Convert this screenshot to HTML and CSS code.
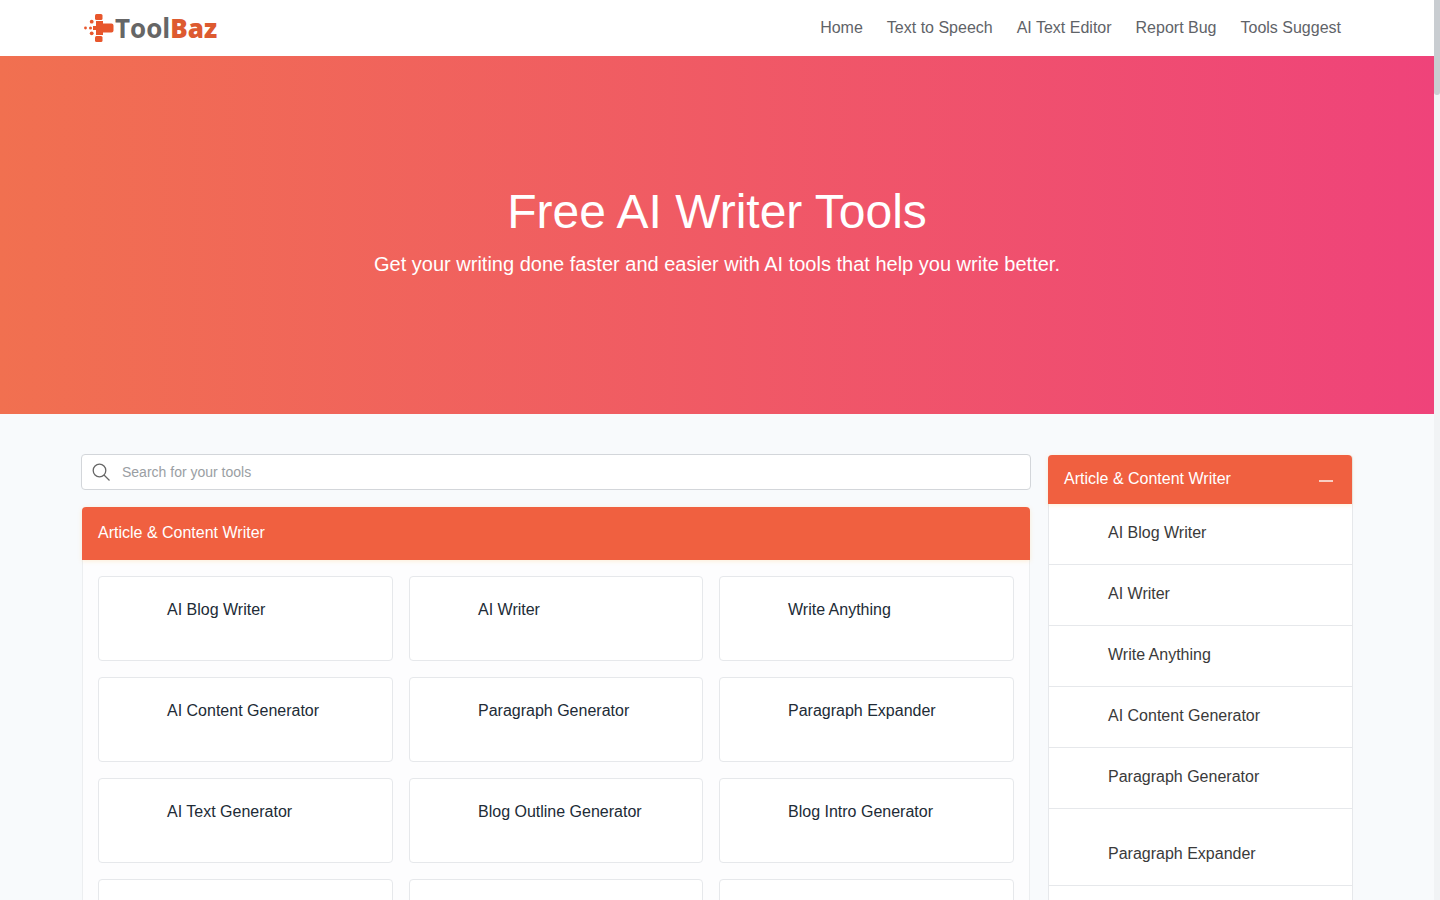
FILE: index.html
```html
<!DOCTYPE html>
<html lang="en">
  <head>
    <meta charset="UTF-8" />
    <title>Free AI Writer Tools - ToolBaz</title>
    <link rel="stylesheet" href="styles.css">
  </head>
  <body>
    <div class="page">
      <header class="topbar">
        <a class="logo" href="#">
          <svg class="logo-mark" width="30" height="30" viewBox="0 0 30 30" fill="#e8562c">
            <path d="M12 8h7v2.500h8.500q2 0 2 2v5q0 2-2 2h-8.500v2.500h-7v-5h-3v-4h3z" />
            <rect x="11" y="1" width="7.500" height="6" rx="1.500" />
            <rect x="11" y="23" width="7.500" height="6" rx="1.500" />
            <circle cx="7.700" cy="8.700" r="1.900" />
            <circle cx="7.700" cy="20.300" r="1.900" />
            <circle cx="6.500" cy="15" r="1.500" />
            <circle cx="1.500" cy="15" r="1.400" />
          </svg>
          <span class="logo-text">Tool<b>Baz</b></span>
        </a>
        <nav class="nav">
          <a href="#">Home</a>
          <a href="#">Text to Speech</a>
          <a href="#">AI Text Editor</a>
          <a href="#">Report Bug</a>
          <a href="#">Tools Suggest</a>
        </nav>
      </header>

      <section class="hero">
        <h1>Free AI Writer Tools</h1>
        <p>Get your writing done faster and easier with AI tools that help you write better.</p>
      </section>

      <main class="content">
        <div class="main-col">
          <div class="search">
            <svg width="18" height="18" viewBox="0 0 18 18" fill="none" stroke="#666" stroke-width="1.300">
              <circle cx="7.500" cy="7.500" r="6.300" />
              <path d="M12 12l5.500 5.500" />
            </svg>
            <input type="text" placeholder="Search for your tools" />
          </div>

          <section class="panel">
            <h2 class="panel-head">Article &amp; Content Writer</h2>
            <div class="tool-grid">
              <a class="tool-card" href="#">AI Blog Writer</a>
              <a class="tool-card" href="#">AI Writer</a>
              <a class="tool-card" href="#">Write Anything</a>
              <a class="tool-card" href="#">AI Content Generator</a>
              <a class="tool-card" href="#">Paragraph Generator</a>
              <a class="tool-card" href="#">Paragraph Expander</a>
              <a class="tool-card" href="#">AI Text Generator</a>
              <a class="tool-card" href="#">Blog Outline Generator</a>
              <a class="tool-card" href="#">Blog Intro Generator</a>
              <a class="tool-card" href="#"></a>
              <a class="tool-card" href="#"></a>
              <a class="tool-card" href="#"></a>
            </div>
          </section>
        </div>

        <aside class="sidebar">
          <div class="side-head">
            <span>Article &amp; Content Writer</span>
            <i class="collapse"></i>
          </div>
          <a class="side-item" href="#">AI Blog Writer</a>
          <a class="side-item" href="#">AI Writer</a>
          <a class="side-item" href="#">Write Anything</a>
          <a class="side-item" href="#">AI Content Generator</a>
          <a class="side-item" href="#">Paragraph Generator</a>
          <a class="side-item side-item-tall" href="#">Paragraph Expander</a>
          <a class="side-item" href="#"></a>
        </aside>
      </main>
    </div>
    <div class="rail"><div class="thumb"></div></div>
  </body>
</html>
```

FILE: styles.css
```css
* {
  box-sizing: border-box;
  margin: 0;
  padding: 0;
}

html,
body {
  height: 900px;
  overflow: hidden;
}

body {
  display: flex;
  background-color: #f8fafc;
  font-family: "Liberation Sans", Arial, sans-serif;
  color: #212529;
}

a {
  color: inherit;
  text-decoration: none;
}

.page {
  flex: 1;
  min-width: 0;
}

.rail {
  width: 6px;
  background-color: #f1f3f5;
}

.thumb {
  height: 95px;
  background-color: #c9cdd1;
  border-radius: 0 0 3px 3px;
}

.topbar {
  height: 56px;
  background-color: #fff;
  display: flex;
  align-items: center;
  justify-content: space-between;
  padding: 0 93px 0 84px;
}

.logo {
  display: flex;
  align-items: center;
  gap: 1px;
}

.logo-text {
  font-family: "Open Sans", sans-serif;
  font-size: 26px;
  font-weight: 700;
  color: #666;
}

.logo-text b {
  color: #dd5a30;
}

.nav {
  display: flex;
  gap: 24px;
  font-size: 16px;
  color: #5f6368;
}

.hero {
  height: 358px;
  background: linear-gradient(90deg, #f17050, #ef437a);
  color: #fff;
  text-align: center;
  padding-top: 127px;
}

.hero h1 {
  font-size: 48px;
  font-weight: 400;
  line-height: 58px;
}

.hero p {
  font-size: 20px;
  line-height: 24px;
  margin-top: 11px;
}

.content {
  display: flex;
  align-items: flex-start;
  gap: 17px;
  padding: 40px 81px 0 81px;
}

.main-col {
  width: 950px;
}

.search {
  height: 36px;
  background-color: #fff;
  border: 1px solid #d3d6da;
  border-radius: 4px;
  display: flex;
  align-items: center;
  gap: 12px;
  padding: 0 11px 0 10px;
}

.search svg {
  flex: none;
  margin-bottom: 1px;
}

.search input {
  flex: 1;
  border: none;
  outline: none;
  background: none;
  font-family: inherit;
  font-size: 14px;
  color: #333;
  padding-bottom: 1px;
}

.search input::placeholder {
  color: #9a9ea3;
}

.panel {
  margin: 17px 1px 0;
  background-color: #fdfdfe;
  border: 1px solid #eceef0;
  border-top: none;
  border-radius: 4px 4px 0 0;
}

.panel-head {
  height: 53px;
  margin: 0 -1px;
  background-color: #f06040;
  border-radius: 4px 4px 0 0;
  box-shadow: 0 1px 4px rgba(255, 190, 90, 0.25);
  color: #fff;
  font-size: 16px;
  font-weight: 400;
  line-height: 51px;
  padding-left: 16px;
}

.tool-grid {
  display: grid;
  grid-template-columns: 295px 294px 295px;
  gap: 16px;
  padding: 16px 15px;
}

.tool-card {
  height: 85px;
  background-color: #fff;
  border: 1px solid #e6e8eb;
  border-radius: 4px;
  padding: 24px 12px 0 68px;
  font-size: 16px;
  line-height: 18px;
  color: #212b36;
}

.sidebar {
  width: 305px;
  margin-top: 1px;
  background-color: #fff;
  border: 1px solid #e6e8eb;
  border-top: none;
  border-radius: 4px 4px 0 0;
}

.side-head {
  height: 49px;
  margin: 0 0 0 -1px;
  background-color: #f06040;
  border-radius: 4px 4px 0 0;
  box-shadow: 0 1px 4px rgba(255, 190, 90, 0.25);
  color: #fff;
  font-size: 16px;
  display: flex;
  align-items: center;
  justify-content: space-between;
  padding: 0 19px 2px 16px;
}

.collapse {
  width: 14px;
  height: 1.500px;
  margin-top: 5px;
  background-color: #f9cfc3;
}

.side-item {
  display: block;
  height: 61px;
  border-bottom: 1px solid #e6e8eb;
  padding: 20px 12px 0 59px;
  font-size: 16px;
  line-height: 18px;
  color: #3a3a3a;
}

.side-item-tall {
  height: 77px;
  padding-top: 36px;
}
```
